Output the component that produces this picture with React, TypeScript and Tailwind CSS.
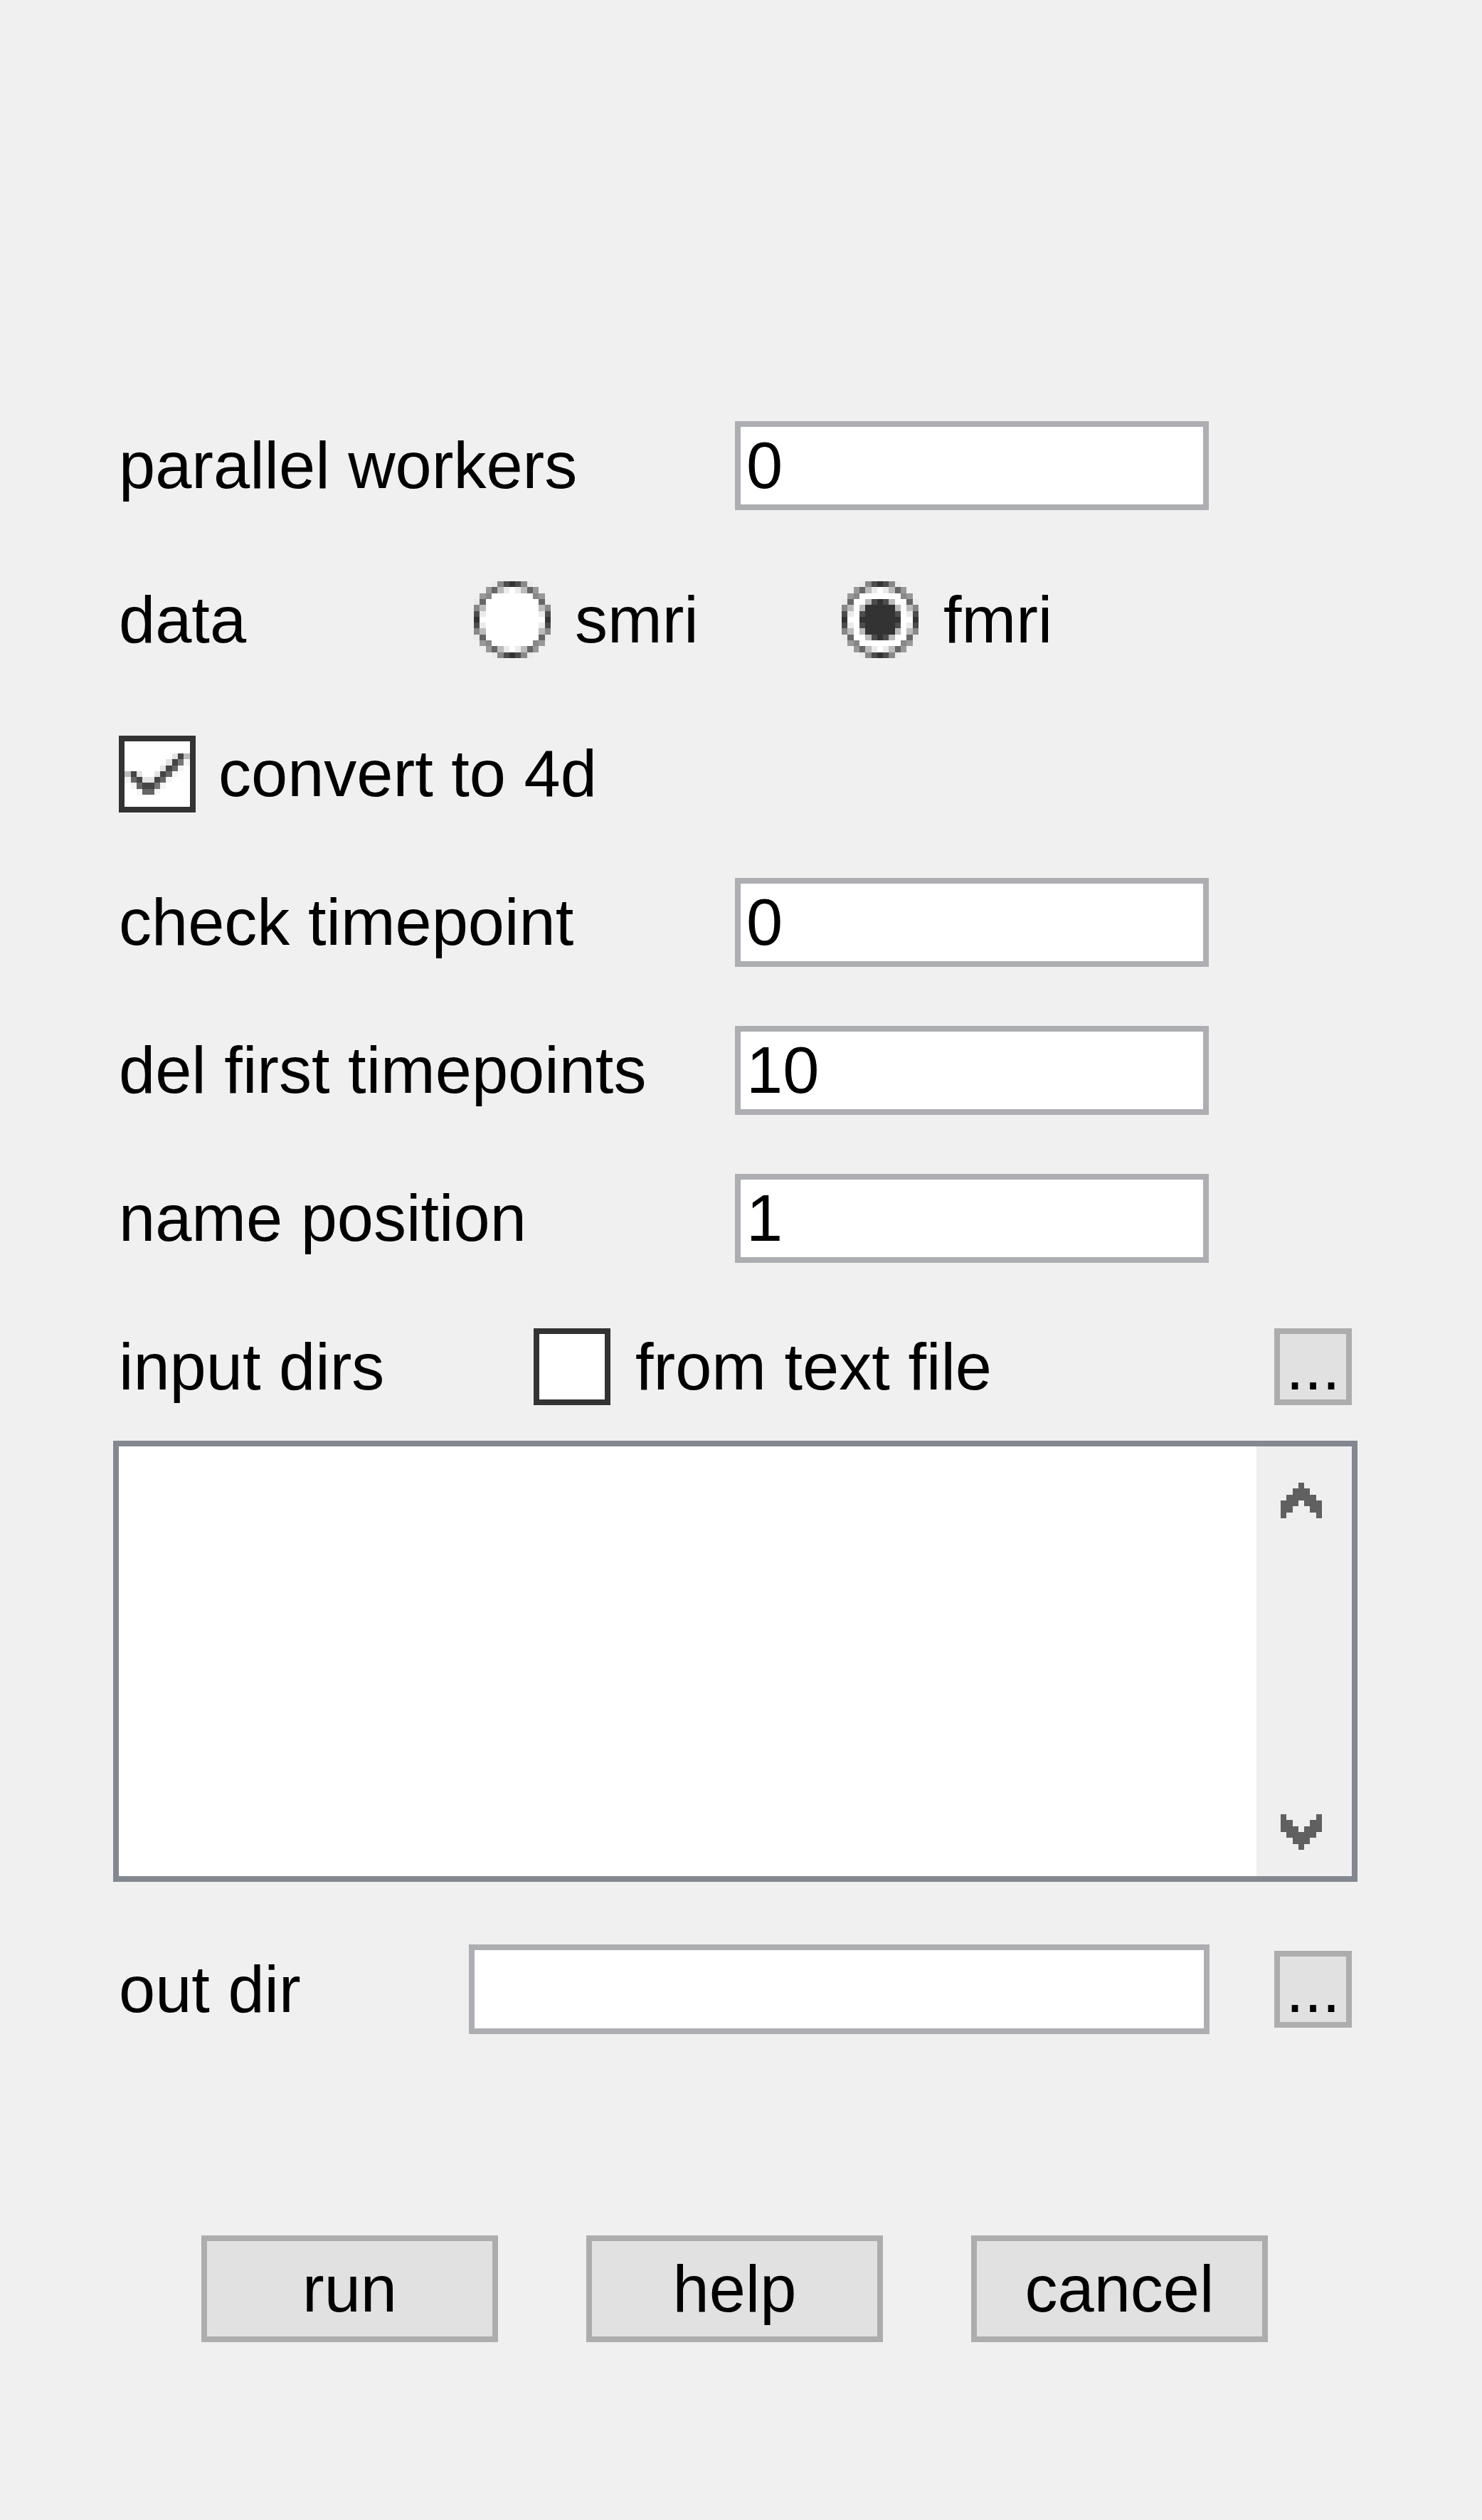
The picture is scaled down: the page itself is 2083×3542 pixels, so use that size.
import React from "react";

const COLORS: Record<string, string> = {
  a: "#ebebeb",
  b: "#888888",
  c: "#4d4d4d",
  d: "#333333",
  e: "#666666",
  f: "#bbbbbb",
  g: "#999999",
  w: "#ffffff",
  k: "#444444",
  l: "#e3e3e3",
  m: "#777777",
  s: "#f5f5f5",
  X: "#606060",
};

const RADIO_OFF = [
  "...abcdcba...",
  "..gefawafeg..",
  ".gbwwwwwwwbg.",
  "aewwwwwwwwwea",
  "bfwwwwwwwwwfb",
  "cawwwwwwwwwac",
  "dwwwwwwwwwwwd",
  "cawwwwwwwwwac",
  "bfwwwwwwwwwfb",
  "aewwwwwwwwwea",
  ".gbwwwwwwwbg.",
  "..gefawafeg..",
  "...abcdcba...",
];

const RADIO_ON = [
  "...abcdcba...",
  "..gefawafeg..",
  ".gbwwwwwwwbg.",
  "aewwfcdcfwwea",
  "bfwfdddddfwfb",
  "cawcdddddcwac",
  "dwwdddddddwwd",
  "cawcdddddcwac",
  "bfwfdddddfwfb",
  "aewwfcdcfwwea",
  ".gbwwwwwwwbg.",
  "..gefawafeg..",
  "...abcdcba...",
];

const CHECK_ON = [
  "ddddddddddddd",
  "dwwwwwwwwwwwd",
  "dwwwwwwwwwwwd",
  "dwwwwwwwwlkfd",
  "dwwwwwwwlkmsd",
  "dwwwwwwlkeswd",
  "dfklwwlkeswwd",
  "dsekllkeswwwd",
  "dwsekkmswwwwd",
  "dwwseeswwwwwd",
  "dwwwwwwwwwwwd",
  "dwwwwwwwwwwwd",
  "ddddddddddddd",
];

const CHECK_OFF = [
  "ddddddddddddd",
  "dwwwwwwwwwwwd",
  "dwwwwwwwwwwwd",
  "dwwwwwwwwwwwd",
  "dwwwwwwwwwwwd",
  "dwwwwwwwwwwwd",
  "dwwwwwwwwwwwd",
  "dwwwwwwwwwwwd",
  "dwwwwwwwwwwwd",
  "dwwwwwwwwwwwd",
  "dwwwwwwwwwwwd",
  "dwwwwwwwwwwwd",
  "ddddddddddddd",
];

const ARROW_UP = [
  "...X...",
  "..XXX..",
  ".XXXXX.",
  "XXX.XXX",
  "XX...XX",
  "X.....X",
];

const ARROW_DOWN = [...ARROW_UP].reverse();

function Pix({ grid, cell }: { grid: string[]; cell: number }) {
  const rows = grid.length;
  const cols = grid[0].length;
  const rects: React.ReactNode[] = [];
  grid.forEach((row, y) => {
    row.split("").forEach((ch, x) => {
      if (ch === ".") return;
      rects.push(
        <rect key={`${x}-${y}`} x={x} y={y} width={1} height={1} fill={COLORS[ch]} />
      );
    });
  });
  return (
    <svg
      width={Math.round(cols * cell)}
      height={Math.round(rows * cell)}
      viewBox={`0 0 ${cols} ${rows}`}
      shapeRendering="crispEdges"
      className="block shrink-0"
    >
      {rects}
    </svg>
  );
}

function TextBox({ value, w }: { value: string; w: string }) {
  return (
    <div
      className={`${w} h-[125px] shrink-0 border-[8px] border-[#adaeb2] bg-white flex items-center pl-[8px]`}
    >
      {value}
    </div>
  );
}

function DotsButton() {
  return (
    <div className="w-[109px] h-[108px] shrink-0 border-[8px] border-[#adadad] bg-[#e1e1e1] flex items-center justify-center">
      ...
    </div>
  );
}

function PushButton({ label }: { label: string }) {
  return (
    <div className="w-[417px] h-[150px] shrink-0 border-[8px] border-[#adadad] bg-[#e1e1e1] flex items-center justify-center">
      {label}
    </div>
  );
}

export default function App() {
  return (
    <div className="w-[2083px] h-[3542px] bg-[#f0f0f0] text-black text-[92px] leading-[normal] font-['Liberation_Sans',Arial,sans-serif] flex flex-col pt-[592px] whitespace-nowrap">
      {/* parallel workers */}
      <div className="flex items-center h-[125px] pl-[167px]">
        <span className="w-[866px] shrink-0">parallel workers</span>
        <TextBox value="0" w="w-[666px]" />
      </div>

      {/* data */}
      <div className="flex items-center h-[108px] pl-[167px] mt-[100px]">
        <span className="w-[499px] shrink-0">data</span>
        <div className="flex items-center w-[517px] shrink-0">
          <Pix grid={RADIO_OFF} cell={8.33} />
          <span className="ml-[34px]">smri</span>
        </div>
        <div className="flex items-center">
          <Pix grid={RADIO_ON} cell={8.33} />
          <span className="ml-[35px]">fmri</span>
        </div>
      </div>

      {/* convert to 4d */}
      <div className="flex items-center h-[109px] pl-[167px] mt-[108px]">
        <Pix grid={CHECK_ON} cell={8.33} />
        <span className="ml-[32px]">convert to 4d</span>
      </div>

      {/* check timepoint */}
      <div className="flex items-center h-[125px] pl-[167px] mt-[92px]">
        <span className="w-[866px] shrink-0">check timepoint</span>
        <TextBox value="0" w="w-[666px]" />
      </div>

      {/* del first timepoints */}
      <div className="flex items-center h-[125px] pl-[167px] mt-[83px]">
        <span className="w-[866px] shrink-0">del first timepoints</span>
        <TextBox value="10" w="w-[666px]" />
      </div>

      {/* name position */}
      <div className="flex items-center h-[125px] pl-[167px] mt-[83px]">
        <span className="w-[866px] shrink-0">name position</span>
        <TextBox value="1" w="w-[666px]" />
      </div>

      {/* input dirs */}
      <div className="flex items-center h-[108px] pl-[167px] pr-[183px] mt-[92px]">
        <span className="w-[583px] shrink-0">input dirs</span>
        <Pix grid={CHECK_OFF} cell={8.33} />
        <span className="ml-[35px]">from text file</span>
        <div className="ml-auto">
          <DotsButton />
        </div>
      </div>

      {/* list box */}
      <div className="ml-[159px] mt-[50px] w-[1749px] h-[620px] border-[8px] border-[#83878f] bg-white flex">
        <div className="flex-1 bg-white" />
        <div className="w-[134px] h-full bg-[#efefef] flex flex-col justify-between pt-[51px] pb-[37px] pl-[34px]">
          <Pix grid={ARROW_UP} cell={8.33} />
          <Pix grid={ARROW_DOWN} cell={8.33} />
        </div>
      </div>

      {/* out dir */}
      <div className="flex items-center h-[126px] pl-[167px] pr-[183px] mt-[88px]">
        <span className="w-[492px] shrink-0">out dir</span>
        <div className="w-[1041px] h-[126px] shrink-0 border-[8px] border-[#adaeb2] bg-white" />
        <div className="ml-auto">
          <DotsButton />
        </div>
      </div>

      {/* buttons */}
      <div className="flex pl-[283px] gap-[124px] mt-[283px]">
        <PushButton label="run" />
        <PushButton label="help" />
        <PushButton label="cancel" />
      </div>
    </div>
  );
}
